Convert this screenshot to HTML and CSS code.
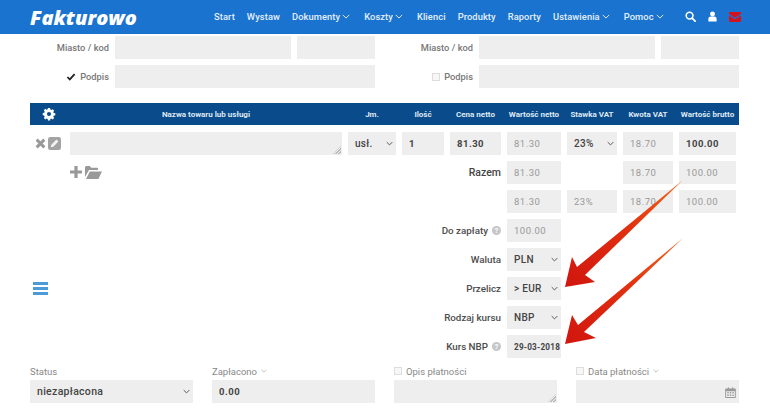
FILE: index.html
```html
<!DOCTYPE html>
<html lang="pl">
<head>
<meta charset="utf-8">
<title>Fakturowo</title>
<link rel="stylesheet" href="styles.css">
</head>
<body>
<header class="topbar">
  <a class="logo">Fakturowo</a>
  <nav class="nav">
    <a>Start</a><a>Wystaw</a>
    <a>Dokumenty<svg class="chev" viewBox="0 0 10 6"><path d="M1 1l4 4 4-4"/></svg></a>
    <a>Koszty<svg class="chev" viewBox="0 0 10 6"><path d="M1 1l4 4 4-4"/></svg></a>
    <a>Klienci</a><a>Produkty</a><a>Raporty</a>
    <a>Ustawienia<svg class="chev" viewBox="0 0 10 6"><path d="M1 1l4 4 4-4"/></svg></a>
    <a>Pomoc<svg class="chev" viewBox="0 0 10 6"><path d="M1 1l4 4 4-4"/></svg></a>
  </nav>
  <div class="tools">
    <svg class="tool" viewBox="0 0 12 12"><circle cx="5" cy="5" r="3.7" fill="none" stroke="#fff" stroke-width="1.7"/><path d="M7.8 7.8l3.2 3.2" stroke="#fff" stroke-width="2" stroke-linecap="round"/></svg>
    <svg class="tool" viewBox="0 0 12 12"><circle cx="6" cy="3.2" r="2.7" fill="#fff"/><path d="M1.500 11.500V8.500C1.500 6.800 3 6 4 6h4c1 0 2.500.8 2.500 2.500v3z" fill="#fff"/></svg>
    <svg class="tool mail" viewBox="0 0 12 10"><path d="M0 2V1.200C0 .5.5 0 1.200 0h9.600C11.500 0 12 .5 12 1.200V2L6 5.800zM0 3.400l6 3.800 6-3.800v5.400c0 .7-.5 1.200-1.200 1.200H1.200C.5 10 0 9.500 0 8.800z" fill="#d3121f"/></svg>
  </div>
</header>

<main class="page">
  <section class="parties">
    <div class="party">
      <label class="lbl">Miasto / kod</label><div class="f"></div><div class="f"></div>
      <label class="lbl"><svg class="check" viewBox="0 0 12 10"><path d="M1.500 5l3 3 6-6.500" fill="none" stroke="#222" stroke-width="2.200"/></svg>Podpis</label><div class="f span2"></div>
    </div>
    <div class="party">
      <label class="lbl">Miasto / kod</label><div class="f"></div><div class="f"></div>
      <label class="lbl"><span class="box"></span>Podpis</label><div class="f span2"></div>
    </div>
  </section>

  <section class="thead">
    <div class="gear"><svg viewBox="0 0 16 16"><path fill="#fff" fill-rule="evenodd" d="M6.600 0h2.800l.4 2.100 1.300.6 1.800-1.200 2 2-1.200 1.800.6 1.300 2.100.4v2.800l-2.100.4-.6 1.300 1.200 1.800-2 2-1.800-1.200-1.300.6-.4 2.100H6.600l-.4-2.100-1.300-.6-1.800 1.200-2-2 1.200-1.800-.6-1.300L-.4 9.400V6.600l2.100-.4.600-1.300-1.200-1.800 2-2 1.800 1.200 1.300-.6zM8 5.300a2.700 2.700 0 100 5.400 2.700 2.700 0 000-5.400z"/></svg></div>
    <div>Nazwa towaru lub usługi</div><div>Jm.</div><div>Ilość</div><div>Cena netto</div><div>Wartość netto</div><div>Stawka VAT</div><div>Kwota VAT</div><div>Wartość brutto</div>
  </section>

  <section class="grid">
    <div class="rowicons">
      <svg class="ic-x" viewBox="0 0 12 12"><path d="M1.800 1.800l8.400 8.400M10.200 1.800l-8.400 8.400" stroke="#999" stroke-width="3.200"/></svg>
      <svg class="ic-edit" viewBox="0 0 14 14"><rect width="14" height="14" rx="2.500" fill="#a3a3a3"/><path d="M3 11l.6-2.700 5.500-5.500 2.100 2.100-5.500 5.500z" fill="#f4f4f4"/></svg>
    </div>
    <div class="f area"><i class="grip"></i></div>
    <div class="f sel"><span>usł.</span><svg class="chev dark" viewBox="0 0 10 6"><path d="M1 1l4 4 4-4"/></svg></div>
    <div class="f v b">1</div>
    <div class="f v b">81.30</div>
    <div class="f v m">81.30</div>
    <div class="f sel"><span>23%</span><svg class="chev dark" viewBox="0 0 10 6"><path d="M1 1l4 4 4-4"/></svg></div>
    <div class="f v m">18.70</div>
    <div class="f v b">100.00</div>

    <div class="add">
      <svg class="ic-plus" viewBox="0 0 12 12"><path d="M6 0v12M0 6h12" stroke="#999" stroke-width="3.200"/></svg>
      <svg class="ic-folder" viewBox="0 0 17 13"><path d="M0 11V1.500C0 .7.700 0 1.500 0h3.200l1.500 1.700h5.500c.8 0 1.300.5 1.300 1.300v1H4L0 11z M1 13l3.800-7.500H17L13.400 13z" fill="#999"/></svg>
    </div>
    <div class="cap razem">Razem</div>
    <div class="f v m">81.30</div>
    <div></div>
    <div class="f v m">18.70</div>
    <div class="f v m">100.00</div>

    <div class="f v m c6">81.30</div>
    <div class="f v m">23%</div>
    <div class="f v m">18.70</div>
    <div class="f v m">100.00</div>

    <div class="cap sum">Do zapłaty<i class="help">?</i></div>
    <div class="f v m">100.00</div>

    <div class="burger"><span></span><span></span><span></span></div>
    <div class="cap sum">Waluta</div>
    <div class="f sel"><span>PLN</span><svg class="chev dark" viewBox="0 0 10 6"><path d="M1 1l4 4 4-4"/></svg></div>

    <div class="cap sum">Przelicz</div>
    <div class="f sel"><span>&gt; EUR</span><svg class="chev dark" viewBox="0 0 10 6"><path d="M1 1l4 4 4-4"/></svg></div>

    <div class="cap sum">Rodzaj kursu</div>
    <div class="f sel"><span>NBP</span><svg class="chev dark" viewBox="0 0 10 6"><path d="M1 1l4 4 4-4"/></svg></div>

    <div class="cap sum">Kurs NBP<i class="help">?</i></div>
    <div class="f v b date">29-03-2018</div>
  </section>

  <section class="pay">
    <div class="pcol"><div class="plabel">Status</div><div class="f sel wide"><span>niezapłacona</span><svg class="chev dark" viewBox="0 0 10 6"><path d="M1 1l4 4 4-4"/></svg></div></div>
    <div class="pcol"><div class="plabel">Zapłacono<svg class="chev grey" viewBox="0 0 10 6"><path d="M1 1l4 4 4-4"/></svg></div><div class="f v b">0.00</div></div>
    <div class="pcol"><div class="plabel"><span class="box"></span>Opis płatności</div><div class="f area"><i class="grip"></i></div></div>
    <div class="pcol"><div class="plabel"><span class="box"></span>Data płatności<svg class="chev grey" viewBox="0 0 10 6"><path d="M1 1l4 4 4-4"/></svg></div><div class="f cal"><svg viewBox="0 0 12 12"><path fill-rule="evenodd" fill="#999" d="M1 1.500h2V.5h1.500v1h3v-1H9v1h2c.5 0 .8.3.8.8v9c0 .4-.3.7-.8.7H1c-.5 0-.8-.3-.8-.7v-9c0-.5.3-.8.8-.8zM1.200 4.500v6.500h9.600V4.500z"/><path fill="#999" d="M2.500 5.500h1.500V7H2.500zM5.200 5.500h1.500V7H5.200zM8 5.500h1.500V7H8zM2.500 8.200h1.500v1.500H2.500zM5.200 8.200h1.500v1.500H5.200zM8 8.200h1.500v1.500H8z"/></svg></div></div>
  </section>
</main>

<svg class="arrows" viewBox="0 0 770 409">
  <defs><linearGradient id="ga" x1="0" y1="1" x2="1" y2="0"><stop offset="0" stop-color="#d1150f"/><stop offset=".55" stop-color="#e2300f"/><stop offset="1" stop-color="#f06a1c"/></linearGradient></defs>
  <path fill="url(#ga)" d="M683 180 L585 275 L595 282 L565 287 L572 257 L577 267 Z"/>
  <path fill="url(#ga)" d="M683 238 L584 332 L596 338 L565 344 L572 315 L578 325 Z"/>
</svg>
</body>
</html>
```
FILE: styles.css
```css
* { box-sizing: border-box; }
html, body { margin: 0; padding: 0; }
body { width: 770px; height: 409px; overflow: hidden; position: relative; background: #fff; font-family: Roboto, "Liberation Sans", sans-serif; color: #555; font-size: 10px; }

.topbar { height: 34px; background: #1a73cf; display: flex; align-items: center; color: #fff; padding: 0 29px 0 30px; }
.logo { font-family: "Open Sans", sans-serif; font-size: 20px; font-weight: 800; font-style: italic; width: 184px; color: #fff; flex: none; }
.nav { display: flex; gap: 12px; font-size: 9.300px; font-weight: 500; letter-spacing: .1px; color: #e4effa; white-space: nowrap; padding-bottom: 2px; }
.nav a { display: flex; align-items: center; gap: 2px; }
.nav .chev { margin-right: 2px; }
.chev { width: 8px; height: 5px; fill: none; stroke: currentColor; stroke-width: 1.200; flex: none; }
.chev.dark { width: 7px; height: 5px; color: #555; stroke-width: 1.400; }
.chev.grey { color: #aaa; width: 6px; height: 4px; }
.tools { display: flex; align-items: center; gap: 11px; margin-left: auto; padding-bottom: 1px; }
.tool { width: 11px; height: 11px; display: block; }
.tool.mail { width: 12px; height: 10px; }

.page { padding: 2px 0 0 30px; width: 740px; }
.f { background: #eee; height: 23px; min-width: 0; position: relative; }

.parties { display: grid; grid-template-columns: 345px 345px; column-gap: 19px; }
.party { display: grid; grid-template-columns: 79px 176px 78px; gap: 6px; }
.span2 { grid-column: span 2; }
.lbl { display: flex; align-items: center; justify-content: flex-end; gap: 4px; font-size: 9.300px; font-weight: 500; color: #777; }
.check { width: 10px; height: 8px; }
.box { display: inline-block; width: 8px; height: 8px; border: 1px solid #ddd; background: #f7f7f7; flex: none; }

.thead { margin-top: 15px; height: 22px; background: #0a4b8c; color: #dfe9f3; display: grid; grid-template-columns: 34px 272px 48px 42px 51px 54px 50px 50px 57px; column-gap: 6px; align-items: center; text-align: center; font-size: 8px; font-weight: 700; white-space: nowrap; width: 709px; }
.gear { display: flex; justify-content: center; padding-left: 3px; }
.gear svg { width: 12px; height: 12px; display: block; overflow: visible; }

.grid { margin-top: 7px; display: grid; grid-template-columns: 34px 272px 48px 42px 51px 54px 50px 50px 57px; column-gap: 6px; row-gap: 6px; grid-auto-rows: 23px; }
.rowicons { display: flex; align-items: center; gap: 2px; padding: 0 0 1px 5px; }
.ic-x { width: 11px; height: 11px; flex: none; }
.ic-edit { width: 13px; height: 13px; flex: none; }
.v { display: flex; align-items: center; padding-left: 7px; font-size: 9.500px; letter-spacing: .5px; white-space: nowrap; }
.b { font-weight: 700; color: #444; }
.m { color: #999; }
.date { font-size: 8.200px; letter-spacing: .2px; }
.sel { display: flex; align-items: center; justify-content: space-between; padding: 0 3px 0 7px; font-size: 10px; font-weight: 500; letter-spacing: .3px; color: #444; white-space: nowrap; }
.area .grip { position: absolute; right: 1px; bottom: 1px; width: 8px; height: 8px; background: repeating-linear-gradient(135deg, transparent 0 1px, #bbb 1px 2px); clip-path: polygon(100% 0, 100% 100%, 0 100%); }
.add { grid-column: 1 / span 2; display: flex; align-items: flex-start; gap: 3px; padding-left: 40px; padding-top: 5px; }
.ic-plus { width: 12px; height: 12px; }
.ic-folder { width: 17px; height: 13px; }
.cap { display: flex; align-items: center; justify-content: flex-end; white-space: nowrap; color: #444; font-weight: 500; }
.razem { grid-column: 3 / span 3; font-size: 10.500px; }
.c6 { grid-column: 6; }
.sum { grid-column: 2 / span 4; font-size: 9.800px; font-weight: 500; color: #4d4d4d; }
.sum + .f { grid-column: 6; }
.help { display: inline-flex; align-items: center; justify-content: center; width: 9px; height: 9px; border-radius: 50%; background: #c6c6c6; color: #fff; font-size: 7px; font-style: normal; font-weight: 700; margin-left: 4px; }
.burger { grid-column: 1; grid-row: 6; display: flex; flex-direction: column; justify-content: center; gap: 2.500px; padding-left: 3px; }
.burger span { display: block; width: 15px; height: 2.500px; background: #4b9bd8; }

.pay { margin-top: 6px; display: grid; grid-template-columns: repeat(4, 163px); column-gap: 19px; }
.plabel { height: 14px; display: flex; align-items: center; gap: 4px; font-size: 9.500px; color: #888; margin-bottom: 2px; }
.wide { font-size: 10.500px; }
.cal svg { position: absolute; right: 3px; top: 7px; width: 11px; height: 11px; }

.arrows { position: absolute; left: 0; top: 0; width: 770px; height: 409px; pointer-events: none; }
```
